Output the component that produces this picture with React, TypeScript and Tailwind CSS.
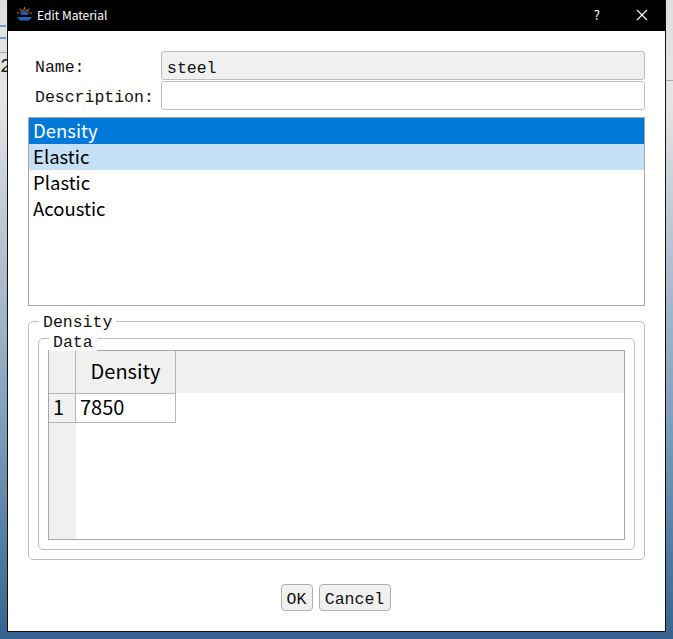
const mono = 'font-["Liberation_Mono",monospace]';
const sans = 'font-["Noto_Sans_CJK_SC","Noto_Sans",sans-serif]';
const materialTypes = ['Density', 'Elastic', 'Plastic', 'Acoustic'];

function AppIcon() {
  return (
    <svg width="17" height="15" viewBox="0 0 17 15">
      <path d="M4.500 8a4 4 0 0 1 8 0z" fill="#2a55b5" />
      <path d="M8.500 0v2M3.500 1.500l1.500 2M13.500 1.500l-1.500 2M1 5.500l2 1M16 5.500l-2 1" stroke="#a8602c" strokeWidth="1.200" />
      <path d="M4 5.500a5 5 0 0 1 9 0" stroke="#c77a35" strokeWidth="1" fill="none" />
      <path d="M1 10h15l-3 3.500H4z" fill="#1c68b5" />
    </svg>
  );
}

export default function App() {
  return (
    <div className="h-[639px] w-[673px] overflow-hidden bg-[linear-gradient(to_bottom,#dedede_0px,#e6e6e6_100px,#c5cdd6_200px,#a0b4c8_320px,#7f9fbc_420px,#35628f_639px)]">
      <div className="flex h-[632px]">
        {/* desktop behind the dialog */}
        <div className="w-[7px] flex flex-col items-start overflow-hidden pt-[25px]">
          <div className="h-[2px] w-[6px] bg-[#6d9cc4]" />
          <div className="mt-[10px] h-[2px] w-[6px] bg-[#6d9cc4]" />
          <div className="mt-[13px] h-px w-[7px] bg-[#a9a9a9]" />
          <div className={`${mono} mt-[3px] text-[20px] leading-[22px] text-[#222]`}>2</div>
        </div>
        <div className="w-[659px] flex flex-col border-l border-r border-b border-[#111] bg-white">
          <div className={`${sans} h-[31px] shrink-0 bg-black text-white flex items-center pl-[8px] pb-[2px] text-[12px]`}>
            <AppIcon />
            <span className="ml-[4px]">Edit Material</span>
            <span className="ml-auto mr-[36px] text-[13px]">?</span>
            <svg width="12" height="12" viewBox="0 0 12 12" className="mr-[17px]">
              <path d="M1 1l10 10M11 1L1 11" stroke="#fff" strokeWidth="1.100" />
            </svg>
          </div>

          <div className="flex-1 flex flex-col pl-[20px] pr-[20px] pt-[20px]">
            <div className={`${mono} text-[16.500px] text-[#111] flex flex-col gap-[1px] pl-[7px]`}>
              <div className="flex items-center h-[29px]">
                <span className="w-[126px] pt-[5px]">Name:</span>
                <div className="flex-1 h-[29px] rounded-[3px] border border-[#bdbdbd] bg-[#f0f0f0] pl-[5px] pt-[3px] leading-[27px]">steel</div>
              </div>
              <div className="flex items-center h-[29px]">
                <span className="w-[126px] pt-[5px]">Description:</span>
                <div className="flex-1 h-[29px] rounded-[3px] border border-[#bdbdbd] bg-white" />
              </div>
            </div>

            <div className={`${sans} mt-[7px] h-[189px] border border-[#a8a8a8] text-[18.500px] text-black`}>
              {materialTypes.map((name, i) => (
                <div
                  key={name}
                  className={`h-[26px] pl-[4px] leading-[24px] ${
                    i === 0 ? 'bg-[#0078d7] text-white' : i === 1 ? 'bg-[#c5e0f7]' : ''
                  }`}
                >
                  {name}
                </div>
              ))}
            </div>

            {/* Density group */}
            <div className="relative mt-[15px] h-[239px] rounded-[5px] border border-[#bdbdbd] px-[9px] pt-[16px]">
              <span className={`${mono} absolute left-[10px] top-[-7px] bg-white px-[4px] text-[16.500px] leading-[16px] text-[#111]`}>Density</span>
              <div className="relative h-[212px] rounded-[5px] border border-[#bdbdbd] pl-[9px] pr-[9px] pt-[11px]">
                <span className={`${mono} absolute left-[10px] top-[-4px] bg-white px-[4px] text-[16.500px] leading-[16px] text-[#111]`}>Data</span>
                <div className={`${sans} h-[190px] border border-[#a8a8a8] flex flex-col text-black text-[20px]`}>
                  <div className="flex h-[42px] bg-[#f0f0f0]">
                    <div className="w-[27px] border-r border-[#b5b5b5]" />
                    <div className="w-[100px] border-r border-[#b5b5b5] flex items-center justify-center pb-[2px]">Density</div>
                  </div>
                  <div className="flex flex-1">
                    <div className="w-[27px] bg-[#f0f0f0]">
                      <div className="h-[30px] border-y border-r border-[#b5b5b5] pl-[4px] leading-[26px]">1</div>
                    </div>
                    <div className="w-[100px] h-[30px] border-y border-r border-[#b5b5b5] pl-[4px] leading-[26px]">7850</div>
                  </div>
                </div>
              </div>
            </div>

            <div className={`${mono} mt-[24px] pr-[2px] flex justify-center gap-[6px] text-[16.500px] text-[#111]`}>
              <div className="h-[27px] w-[32px] rounded-[4px] border border-[#b0b0b0] bg-[#f0f0f0] text-center pt-[1px] leading-[27px]">OK</div>
              <div className="h-[27px] w-[72px] rounded-[4px] border border-[#b0b0b0] bg-[#f0f0f0] text-center pt-[1px] leading-[27px]">Cancel</div>
            </div>
          </div>
        </div>
        <div className="flex-1 pt-[80px]">
          <div className="h-px bg-[#a9a9a9]" />
        </div>
      </div>
    </div>
  );
}
